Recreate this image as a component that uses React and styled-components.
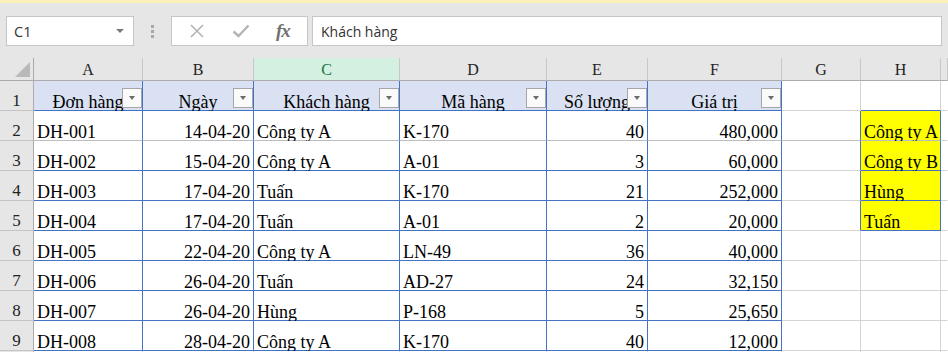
import React from "react";
import styled, { createGlobalStyle } from "styled-components";

const GlobalStyle = createGlobalStyle`
  html, body {
    margin: 0;
    padding: 0;
    background: #ffffff;
    overflow: hidden;
  }
`;

const BLUE = "#4472c4";
const GRID = "#d4d4d4";

const Sheet = styled.div`
  width: 948px;
  height: 352px;
  overflow: hidden;
  background: #ffffff;
`;

const TopStrip = styled.div`
  height: 3px;
  background: #fbf1b8;
`;

const FormulaBar = styled.div`
  height: 55px;
  box-sizing: border-box;
  padding: 13px 6px 0 6px;
  background: #e6e6e6;
  display: flex;
  align-items: flex-start;
`;

const NameBox = styled.div`
  width: 128px;
  height: 30px;
  box-sizing: border-box;
  border: 1px solid #c6c6c6;
  background: #ffffff;
  display: flex;
  align-items: center;
  justify-content: space-between;
  padding: 0 9px 0 7px;
  font-family: "Open Sans", "Noto Sans", sans-serif;
  font-size: 14.5px;
  color: #333333;
`;

const Caret = styled.span`
  width: 0;
  height: 0;
  border-left: 4px solid transparent;
  border-right: 4px solid transparent;
  border-top: 4px solid #7a7a7a;
`;

const Grip = styled.div`
  width: 37px;
  height: 30px;
  display: flex;
  flex-direction: column;
  align-items: center;
  justify-content: center;
  gap: 2px;
`;

const GripDot = styled.span`
  width: 3px;
  height: 3px;
  background: #a8a8a8;
`;

const FuncBox = styled.div`
  width: 137px;
  height: 30px;
  box-sizing: border-box;
  border: 1px solid #c6c6c6;
  background: #ffffff;
  display: flex;
  align-items: center;
  justify-content: space-around;
  padding: 0 4px;
`;

const Fx = styled.span`
  font-family: "Liberation Serif", serif;
  font-style: italic;
  font-weight: bold;
  font-size: 19px;
  color: #707070;
  letter-spacing: -1px;
`;

const FormulaInput = styled.div`
  flex: 1;
  height: 30px;
  margin-left: 4px;
  box-sizing: border-box;
  border: 1px solid #c6c6c6;
  background: #ffffff;
  display: flex;
  align-items: center;
  padding-left: 8px;
  font-family: "Open Sans", "Noto Sans", sans-serif;
  font-size: 14px;
  color: #333333;
`;

const Row = styled.div`
  display: flex;
  height: ${({ $h }) => $h}px;
`;

const ColHead = styled.div`
  width: ${({ $w }) => ($w ? `${$w}px` : "auto")};
  flex: ${({ $w }) => ($w ? "none" : "1")};
  box-sizing: border-box;
  background: ${({ $sel }) => ($sel ? "#d3f0e0" : "#e6e6e6")};
  color: ${({ $sel }) => ($sel ? "#217346" : "#222222")};
  border-right: 1px solid #c8c8c8;
  border-bottom: 1px solid #ababab;
  display: flex;
  align-items: flex-end;
  justify-content: center;
  padding-bottom: 2px;
  line-height: 16px;
  font-family: "Liberation Serif", serif;
  font-size: 16px;
`;

const Corner = styled(ColHead)`
  position: relative;
  border-right-color: #ababab;
`;

const CornerTriangle = styled.span`
  position: absolute;
  right: 3px;
  bottom: 3px;
  width: 0;
  height: 0;
  border-left: 15px solid transparent;
  border-bottom: 15px solid #b9b9b9;
`;

const RowHead = styled.div`
  width: 34px;
  flex: none;
  box-sizing: border-box;
  background: #e6e6e6;
  border-right: 1px solid #ababab;
  border-bottom: 1px solid #c4c4c4;
  display: flex;
  align-items: flex-end;
  justify-content: center;
  line-height: 16px;
  padding-bottom: 1px;
  font-family: "Liberation Serif", serif;
  font-size: 17px;
  color: #222222;
`;

const Cell = styled.div`
  position: relative;
  width: ${({ $w }) => ($w ? `${$w}px` : "auto")};
  flex: ${({ $w }) => ($w ? "none" : "1")};
  box-sizing: border-box;
  background: ${({ $bg }) => $bg};
  border-right: 1px solid ${({ $r }) => $r};
  border-bottom: 1px solid ${({ $b }) => $b};
  display: flex;
  align-items: flex-end;
  justify-content: ${({ $align }) =>
    $align === "right" ? "flex-end" : $align === "center" ? "center" : "flex-start"};
  padding: 0 3px 0 3px;
  line-height: 16px;
  white-space: nowrap;
  font-family: "Liberation Serif", "Times New Roman", serif;
  font-size: 18px;
  color: #000000;
`;

const FilterButton = styled.span`
  position: absolute;
  right: 0;
  bottom: 2px;
  width: 20px;
  height: 20px;
  box-sizing: border-box;
  border: 1px solid #a6a6a6;
  background: #fafafa;
  display: flex;
  align-items: center;
  justify-content: center;
  &::after {
    content: "";
    width: 0;
    height: 0;
    border-left: 3.5px solid transparent;
    border-right: 3.5px solid transparent;
    border-top: 4px solid #6b6b6b;
  }
`;

const columns = [
  { key: "A", w: 109, align: "left" },
  { key: "B", w: 111, align: "right" },
  { key: "C", w: 146, align: "left" },
  { key: "D", w: 147, align: "left" },
  { key: "E", w: 101, align: "right" },
  { key: "F", w: 134, align: "right" },
  { key: "G", w: 79, align: "left" },
  { key: "H", w: 80, align: "left" },
  { key: "I", w: 0, align: "left" },
];

const headers = ["Đơn hàng", "Ngày", "Khách hàng", "Mã hàng", "Số lượng", "Giá trị"];

const data = [
  ["DH-001", "14-04-20", "Công ty A", "K-170", "40", "480,000", "", "Công ty A"],
  ["DH-002", "15-04-20", "Công ty A", "A-01", "3", "60,000", "", "Công ty B"],
  ["DH-003", "17-04-20", "Tuấn", "K-170", "21", "252,000", "", "Hùng"],
  ["DH-004", "17-04-20", "Tuấn", "A-01", "2", "20,000", "", "Tuấn"],
  ["DH-005", "22-04-20", "Công ty A", "LN-49", "36", "40,000"],
  ["DH-006", "26-04-20", "Tuấn", "AD-27", "24", "32,150"],
  ["DH-007", "26-04-20", "Hùng", "P-168", "5", "25,650"],
  ["DH-008", "28-04-20", "Công ty A", "K-170", "40", "12,000"],
];

// border colours of a cell, by row number (1-based) and column index
const cellStyle = (row, col) => {
  const inTable = col <= 5 && row <= 9;
  const inList = col === 7 && row >= 2 && row <= 5;
  let r = GRID;
  let b = GRID;
  let bg = "#ffffff";
  if (inTable) {
    r = BLUE;
    b = BLUE;
    if (row === 1) bg = "#d9e1f2";
  }
  if (col === 6 && row >= 2 && row <= 5) r = BLUE;
  if (col === 7 && row === 1) b = BLUE;
  if (inList) {
    r = BLUE;
    b = BLUE;
    bg = "#ffff00";
  }
  if (row === 2 && col !== 8) b = "#bdbdbd";
  if (col === 8) r = "transparent";
  return { r, b, bg };
};

const X = () => (
  <svg width="16" height="14" viewBox="0 0 16 14">
    <path d="M2 1 L14 13 M14 1 L2 13" stroke="#b4b4b4" strokeWidth="1.6" fill="none" />
  </svg>
);

const Check = () => (
  <svg width="18" height="14" viewBox="0 0 18 14">
    <path d="M1.5 7.5 L6.5 12 L16.5 1.5" stroke="#b4b4b4" strokeWidth="2.4" fill="none" />
  </svg>
);

const App = () => {
  return (
    <Sheet>
      <GlobalStyle />
      <TopStrip />
      <FormulaBar>
        <NameBox>
          C1
          <Caret />
        </NameBox>
        <Grip>
          <GripDot />
          <GripDot />
          <GripDot />
        </Grip>
        <FuncBox>
          <X />
          <Check />
          <Fx>fx</Fx>
        </FuncBox>
        <FormulaInput>Khách hàng</FormulaInput>
      </FormulaBar>

      <Row $h={23}>
        <Corner $w={34}>
          <CornerTriangle />
        </Corner>
        {columns.map((c) => (
          <ColHead key={c.key} $w={c.w} $sel={c.key === "C"}>
            {c.w ? c.key : ""}
          </ColHead>
        ))}
      </Row>

      <Row $h={30}>
        <RowHead>1</RowHead>
        {columns.map((c, i) => {
          const s = cellStyle(1, i);
          return (
            <Cell key={c.key} $w={c.w} $align="center" $r={s.r} $b={s.b} $bg={s.bg}>
              {headers[i]}
              {i < 6 && <FilterButton />}
            </Cell>
          );
        })}
      </Row>

      {data.map((d, ri) => {
        const row = ri + 2;
        return (
          <Row key={row} $h={30}>
            <RowHead>{row}</RowHead>
            {columns.map((c, i) => {
              const s = cellStyle(row, i);
              return (
                <Cell key={c.key} $w={c.w} $align={c.align} $r={s.r} $b={s.b} $bg={s.bg}>
                  {d[i]}
                </Cell>
              );
            })}
          </Row>
        );
      })}

      <Row $h={30}>
        <RowHead />
        {columns.map((c, i) => {
          const s = cellStyle(10, i);
          return <Cell key={c.key} $w={c.w} $r={s.r} $b={s.b} $bg={s.bg} />;
        })}
      </Row>
    </Sheet>
  );
};

export default App;
